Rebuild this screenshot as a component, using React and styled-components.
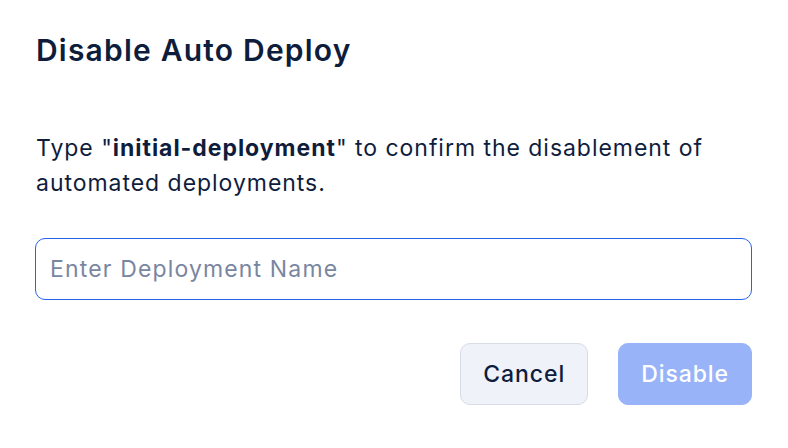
import styled, { createGlobalStyle } from 'styled-components'

/*---> Component <---*/
export default function App() {
  return (
    <>
      <GlobalStyle />
      <Dialog>
        <Title>Disable Auto Deploy</Title>
        <Message>
          Type "<strong>initial-deployment</strong>" to confirm the disablement of
          automated deployments.
        </Message>
        <NameInput placeholder="Enter Deployment Name" />
        <Actions>
          <Button>Cancel</Button>
          <Button $primary disabled>
            Disable
          </Button>
        </Actions>
      </Dialog>
    </>
  )
}

/*---> Styles <---*/
const GlobalStyle = createGlobalStyle`
  body {
    margin: 0;
    background: #ffffff;
    font-family: Inter, 'Liberation Sans', sans-serif;
    color: #0f1d3d;
  }
`

const Dialog = styled.div`
  width: 788px;
  height: 448px;
  box-sizing: border-box;
  padding: 32px 36px 0 35px;
  display: flex;
  flex-direction: column;
`

const Title = styled.h2`
  margin: 0 0 0 1px;
  font-size: 30px;
  line-height: 36px;
  font-weight: 600;
  letter-spacing: 0.04em;
`

const Message = styled.p`
  margin: 63px 0 0 1px;
  font-size: 23px;
  line-height: 35px;
  font-weight: 400;
  letter-spacing: 0.042em;
  max-width: 705px;

  strong {
    font-weight: 700;
  }
`

const NameInput = styled.input`
  margin-top: 37px;
  height: 62px;
  box-sizing: border-box;
  width: 100%;
  border: 1px solid #2563eb;
  border-radius: 10px;
  padding: 0 14px;
  font-family: inherit;
  font-size: 23px;
  letter-spacing: 0.05em;
  color: #0f1d3d;
  outline: none;

  &::placeholder {
    color: #7a86a0;
  }
`

const Actions = styled.div`
  margin-top: 43px;
  display: flex;
  justify-content: flex-end;
  gap: 30px;
`

const Button = styled.button`
  height: 62px;
  padding: 0 22px;
  box-sizing: border-box;
  border-radius: 10px;
  font-family: inherit;
  font-size: 23px;
  font-weight: 500;
  letter-spacing: 0.04em;
  cursor: pointer;
  border: 1px solid ${(p) => (p.$primary ? '#98b3f8' : '#d8dce6')};
  background: ${(p) => (p.$primary ? '#98b3f8' : '#f0f2fa')};
  color: ${(p) => (p.$primary ? '#ffffff' : '#0f1d3d')};
`
